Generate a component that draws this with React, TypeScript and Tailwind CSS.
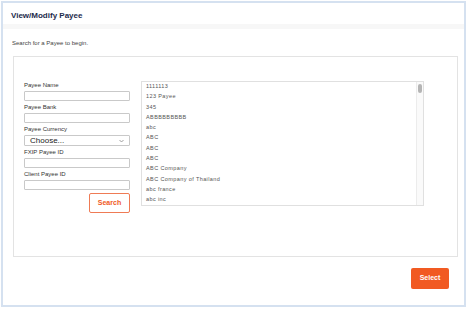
export default function App() {
  const payees = [
    '1111113',
    '123 Payee',
    '345',
    'ABBBBBBBBB',
    'abc',
    'ABC',
    'ABC',
    'ABC',
    'ABC Company',
    'ABC Company of Thailand',
    'abc france',
    'abc inc',
  ]

  const fields = ['Payee Name', 'Payee Bank', 'Payee Currency', 'FXIP Payee ID', 'Client Payee ID']

  return (
    <div className="w-[467px] h-[309px] bg-white p-[1px] font-['Liberation_Sans',Arial,sans-serif]">
      <div className="h-[306px] border-2 border-[#d5e1f0] flex flex-col">
        {/* header */}
        <div className="h-[21px] pt-[8px] px-[8px]">
          <h1 className="text-[8px] leading-[10px] font-bold text-[#1d2b4c]">View/Modify Payee</h1>
        </div>
        <div className="h-[5px] bg-[#f7f7f7]" />

        <div className="pl-[10px] pr-[6px]">
          <p className="mt-[11px] text-[6px] leading-[6px] text-[#444] -ml-[1px]">Search for a Payee to begin.</p>

          <div className="mt-[10px] h-[201px] border border-[#e3e3e3] flex pl-[10px] pt-[24px]">
            {/* search form */}
            <div className="w-[107px] flex flex-col pt-[1px]">
              {fields.map((f, i) => (
                <div key={f} className={i > 0 ? 'mt-[3px]' : ''}>
                  <label className="block text-[6px] leading-[6px] text-[#333] mb-[3px]">{f}</label>
                  {f === 'Payee Currency' ? (
                    <div className="h-[11px] w-[106px] border border-[#c9c9c9] rounded-[1px] bg-white flex items-center justify-between pl-[5px] pr-[5px]">
                      <span className="text-[8px] leading-[8px] text-[#222]">Choose...</span>
                      <svg width="5" height="4" viewBox="0 0 5 4" className="text-[#888]">
                        <path d="M0.5 1 L2.5 3 L4.5 1" fill="none" stroke="currentColor" strokeWidth="0.8" />
                      </svg>
                    </div>
                  ) : (
                    <div className="h-[10px] w-[106px] border border-[#c9c9c9] rounded-[1px] bg-white" />
                  )}
                </div>
              ))}
              <div className="mt-[3px] flex justify-end pr-[1px]">
                <button className="h-[20px] w-[41px] border border-[#ef7b55] rounded-[2px] bg-white text-[7px] font-bold text-[#ef5a24]">
                  Search
                </button>
              </div>
            </div>

            {/* payee list */}
            <div className="ml-[10px] w-[283px] h-[125px] border border-[#e0e0e0] flex overflow-hidden">
              <ul className="flex-1 pl-[4px] -mt-[1px]">
                {payees.map((p, i) => (
                  <li key={i} className="text-[5.5px] leading-[10.3px] tracking-[0.4px] text-[#555] whitespace-nowrap">
                    {p}
                  </li>
                ))}
              </ul>
              <div className="w-[7px] border-l border-[#ececec] bg-[#fafafa] flex justify-center pt-[2px]">
                <div className="w-[4px] h-[9px] rounded-[2px] bg-[#b5b5b5]" />
              </div>
            </div>
          </div>

          <div className="mt-[11px] flex justify-end pr-[9px]">
            <button className="h-[21px] w-[38px] rounded-[2px] bg-[#f15a22] text-white text-[7px] font-bold">
              Select
            </button>
          </div>
        </div>
      </div>
    </div>
  )
}
